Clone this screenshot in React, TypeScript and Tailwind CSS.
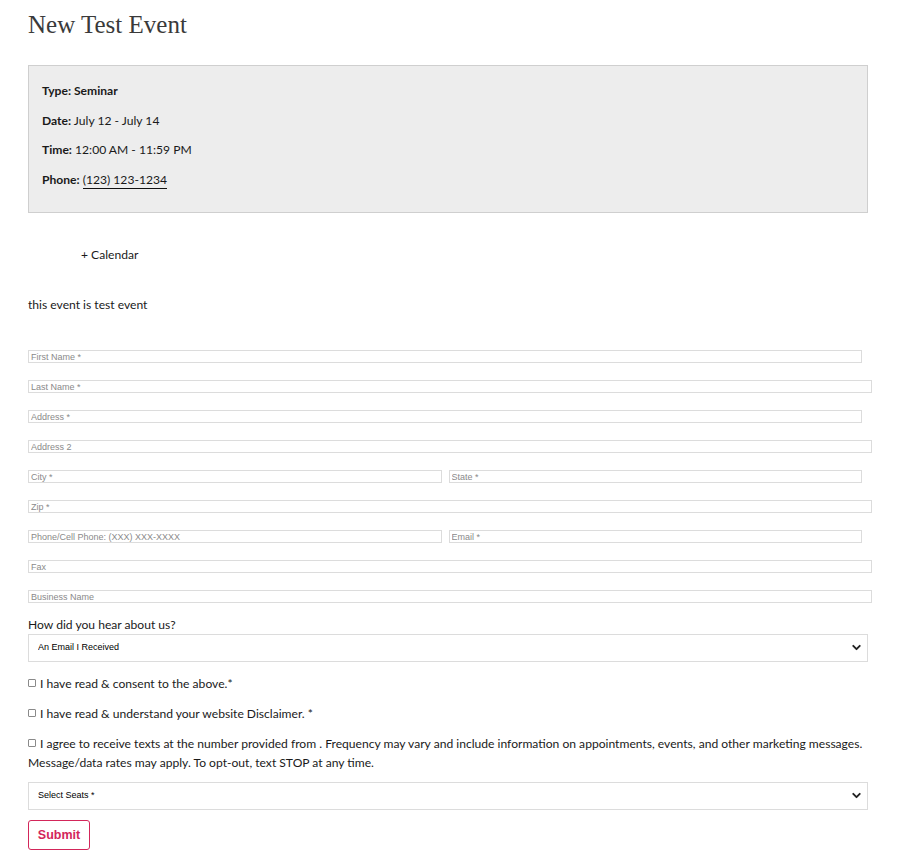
import { ChevronDown } from "lucide-react";

type Field = { ph: string; w: "full" | "short" };

const ROWS: Field[][] = [
  [{ ph: "First Name *", w: "short" }],
  [{ ph: "Last Name *", w: "full" }],
  [{ ph: "Address *", w: "short" }],
  [{ ph: "Address 2", w: "full" }],
  [
    { ph: "City *", w: "full" },
    { ph: "State *", w: "full" },
  ],
  [{ ph: "Zip *", w: "full" }],
  [
    { ph: "Phone/Cell Phone: (XXX) XXX-XXXX", w: "full" },
    { ph: "Email *", w: "full" },
  ],
  [{ ph: "Fax", w: "full" }],
  [{ ph: "Business Name", w: "full" }],
];

function TextInput({ ph, className = "" }: { ph: string; className?: string }) {
  return (
    <input
      placeholder={ph}
      className={`h-[13px] border border-[#dcdcdc] bg-white px-[2px] text-[9px] leading-none font-['Liberation_Sans',Arial,sans-serif] placeholder:text-[#8a8a8a] outline-none ${className}`}
    />
  );
}

function Select({ label }: { label: string }) {
  return (
    <div className="relative w-[840px]">
      <select className="h-[28px] w-full appearance-none border border-[#dcdcdc] bg-white pl-[9px] text-[9px] text-black font-['Liberation_Sans',Arial,sans-serif] outline-none">
        <option>{label}</option>
      </select>
      <ChevronDown
        size={13}
        strokeWidth={3.5}
        className="pointer-events-none absolute right-[5px] top-[7px] text-[#222]"
      />
    </div>
  );
}

function Check({ children }: { children: React.ReactNode }) {
  return (
    <div className="leading-[19px]">
      <span className="mr-[4px] inline-block h-[8px] w-[8px] rounded-[1px] border border-[#8a8a8a] bg-white align-[1px]" />
      {children}
    </div>
  );
}

export default function App() {
  return (
    <div className="min-h-[866px] bg-white px-[28px] font-['Lato','Open_Sans',sans-serif] text-[12.1px] text-[#1a1a1a]">
      <h1 className="pt-[9px] font-['Liberation_Serif',serif] text-[25px] font-light leading-[32px] text-[#3a3a3a]">
        New Test Event
      </h1>

      <div className="mt-[24px] flex h-[148px] w-[840px] flex-col gap-[10px] border border-[#cfcfcf] bg-[#ededed] px-[13px] pt-[15px]">
        <p className="leading-[19.5px] font-bold">Type: Seminar</p>
        <p className="leading-[19.5px]">
          <b>Date:</b> July 12 - July 14
        </p>
        <p className="leading-[19.5px]">
          <b>Time:</b> 12:00 AM - 11:59 PM
        </p>
        <p className="leading-[19.5px]">
          <b>Phone:</b>{" "}
          <span className="border-b border-[#111] pb-[1px]">(123) 123-1234</span>
        </p>
      </div>

      <p className="mt-[32px] pl-[53px] leading-[19px]">+ Calendar</p>

      <p className="mt-[31px] leading-[19px]">this event is test event</p>

      <form className="mt-[36px] flex flex-col">
        <div className="flex flex-col gap-[17px]">
          {ROWS.map((row, i) =>
            row.length === 1 ? (
              <TextInput
                key={i}
                ph={row[0].ph}
                className={row[0].w === "short" ? "w-[834px]" : "w-[844px]"}
              />
            ) : (
              <div key={i} className="flex w-[834px] gap-[7px]">
                {row.map((f) => (
                  <TextInput key={f.ph} ph={f.ph} className="w-[413px] flex-1" />
                ))}
              </div>
            )
          )}
        </div>

        <label className="mt-[13px] leading-[18px]">How did you hear about us?</label>
        <Select label="An Email I Received" />

        <div className="mt-[12px] flex flex-col gap-[11px]">
          <Check>I have read &amp; consent to the above.*</Check>
          <Check>I have read &amp; understand your website Disclaimer. *</Check>
          <Check>
            I agree to receive texts at the number provided from . Frequency may vary and include
            information on appointments, events, and other marketing messages. Message/data rates
            may apply. To opt-out, text STOP at any time.
          </Check>
        </div>

        <div className="mt-[10px]">
          <Select label="Select Seats *" />
        </div>

        <div className="mt-[10px]">
          <button
            type="button"
            className="h-[30px] w-[62px] rounded-[3px] border border-[#d3265a] bg-white font-['Liberation_Sans',Arial,sans-serif] text-[12.5px] font-bold text-[#d3265a]"
          >
            Submit
          </button>
        </div>
      </form>
    </div>
  );
}
